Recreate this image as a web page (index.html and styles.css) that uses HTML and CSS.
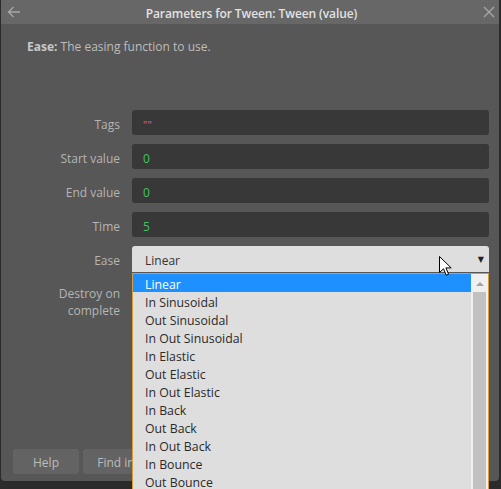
FILE: index.html
```html
<!DOCTYPE html>
<html lang="en">
<head>
    <meta charset="UTF-8">
    <title>Parameters for Tween</title>
    <link rel="stylesheet" href="styles.css">
</head>
<body>
    <div class="dialog">
        <div class="titlebar">
            <svg class="title-icon" width="14" height="14" viewBox="0 0 14 14">
                <path d="M13 7H1.5M6.5 2L1.5 7l5 5" fill="none" stroke="#a8a8a8" stroke-width="1.3"/>
            </svg>
            <div class="title">Parameters for Tween: Tween (value)</div>
            <svg class="title-icon" width="14" height="14" viewBox="0 0 14 14">
                <path d="M2 2l10 10M12 2L2 12" fill="none" stroke="#a8a8a8" stroke-width="1.3"/>
            </svg>
        </div>

        <p class="desc"><b>Ease:</b> The easing function to use.</p>

        <div class="form">
            <label class="label">Tags</label>
            <div class="field"><span class="str">""</span></div>

            <label class="label">Start value</label>
            <div class="field"><span class="num">0</span></div>

            <label class="label">End value</label>
            <div class="field"><span class="num">0</span></div>

            <label class="label">Time</label>
            <div class="field"><span class="num">5</span></div>

            <label class="label">Ease</label>
            <div class="select">Linear<span class="caret">&#9660;</span></div>

            <label class="label label-top">Destroy on<br>complete</label>
            <div class="check"></div>
        </div>

        <div class="footer">
            <button class="btn">Help</button>
            <button class="btn">Find in</button>
        </div>

        <div class="dropdown">
            <ul class="options">
                <li class="selected">Linear</li>
                <li>In Sinusoidal</li>
                <li>Out Sinusoidal</li>
                <li>In Out Sinusoidal</li>
                <li>In Elastic</li>
                <li>Out Elastic</li>
                <li>In Out Elastic</li>
                <li>In Back</li>
                <li>Out Back</li>
                <li>In Out Back</li>
                <li>In Bounce</li>
                <li>Out Bounce</li>
            </ul>
            <div class="scrollbar">
                <div class="scroll-up"></div>
                <div class="thumb"></div>
            </div>
        </div>

        <svg class="cursor" width="13" height="20" viewBox="0 0 13 20">
            <path d="M0.5 0.5V16.5L4.5 12.8L7.3 19.2L9.6 18.2L6.9 11.9H12.2Z" fill="#fff" stroke="#000" stroke-width="1"/>
        </svg>
    </div>
</body>
</html>
```

FILE: styles.css
```css
html,
body {
    height: 100%;
}

body {
    margin: 0;
    padding: 0;
    background-color: #2b2b2b;
    font-family: "Open Sans", "Noto Sans", sans-serif;
    font-size: 12px;
    overflow: hidden;
}

.dialog {
    position: relative;
    width: 498px;
    height: 481px;
    margin-left: 1px;
    background-color: #575757;
    border-radius: 0 0 4px 4px;
    display: flex;
    flex-direction: column;
}

.titlebar {
    height: 24px;
    background-color: #676767;
    display: flex;
    align-items: center;
    padding: 0 3px 0 6px;
}

.title-icon {
    flex: none;
}

.title {
    flex: 1;
    text-align: center;
    color: #e2e2e2;
    font-weight: 600;
    font-size: 12px;
    letter-spacing: -0.1px;
    padding-top: 2px;
}

.desc {
    margin: 15px 0 0 26px;
    color: #bdbdbd;
    line-height: 16px;
}

.desc b {
    color: #c8c8c8;
}

.form {
    display: grid;
    grid-template-columns: 119px 1fr;
    column-gap: 12px;
    row-gap: 9px;
    margin-top: 55px;
    padding-right: 10px;
}

.label {
    color: #b5b5b5;
    text-align: right;
    align-self: center;
    line-height: 17px;
    padding-top: 3px;
}

.label-top {
    align-self: start;
    padding-top: 4px;
}

.field {
    height: 25px;
    box-sizing: border-box;
    background-color: #383838;
    border-radius: 3px;
    display: flex;
    align-items: center;
    padding: 3px 0 0 11px;
}

.num {
    color: #3ec55c;
}

.str {
    color: #d8649a;
    font-size: 11px;
}

.select {
    height: 26px;
    box-sizing: border-box;
    background-color: #dedede;
    border-radius: 3px 3px 0 0;
    color: #333;
    display: flex;
    align-items: center;
    padding: 2px 0 0 13px;
}

.caret {
    margin-left: auto;
    margin-right: 5px;
    margin-top: -2px;
    font-size: 8px;
    color: #222;
    font-family: "DejaVu Sans", sans-serif;
}

.check {
    height: 20px;
}

.footer {
    margin-top: auto;
    display: flex;
    gap: 4px;
    padding: 0 0 7px 12px;
}

.btn {
    width: 66px;
    height: 25px;
    padding: 2px 0 0;
    border: none;
    border-radius: 3px;
    background-color: #636363;
    color: #bcbcbc;
    font-family: "Open Sans", "Noto Sans", sans-serif;
    font-size: 12px;
}

.dropdown {
    position: absolute;
    left: 131px;
    top: 273px;
    width: 355px;
    height: 230px;
    border: 1px solid #d89d3b;
    background-color: #dedede;
    display: flex;
}

.options {
    list-style: none;
    margin: 0;
    padding: 0;
    flex: 1;
}

.options li {
    height: 18px;
    box-sizing: border-box;
    line-height: 15px;
    padding: 3px 0 0 12px;
    color: #2a2a2a;
    font-size: 12.3px;
}

.options li.selected {
    background-color: #1e90ff;
    color: #fff;
}

.scrollbar {
    width: 17px;
    background-color: #f0f0f0;
    display: flex;
    flex-direction: column;
    align-items: center;
}

.scroll-up {
    width: 0;
    height: 0;
    margin-top: 8px;
    border-left: 4px solid transparent;
    border-right: 4px solid transparent;
    border-bottom: 4px solid #a3a3a3;
}

.thumb {
    width: 13px;
    flex: 1;
    margin-top: 6px;
    background-color: #c1c1c1;
}

.cursor {
    position: absolute;
    left: 438px;
    top: 256px;
}
```
